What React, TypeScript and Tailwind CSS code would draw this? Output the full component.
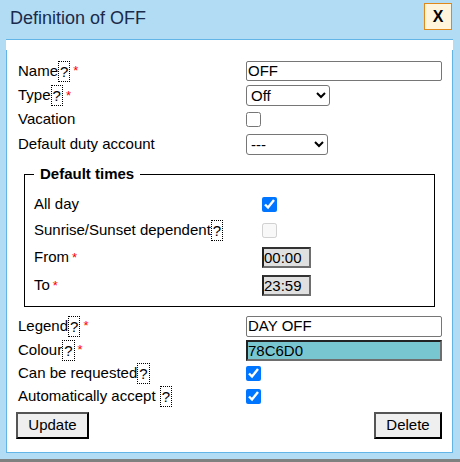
import React from 'react';

const Help = () => (
  <span className="inline-block border border-dotted border-black px-[1px] leading-[19px]">?</span>
);

const Req = () => <span className="text-[#ff0000] text-[13px] align-top ml-[3px]">*</span>;

const Row = ({ label, h = 'h-[24px]', children }: { label: React.ReactNode; h?: string; children?: React.ReactNode }) => (
  <div className={`flex items-center ${h}`}>
    <div className="w-[228px] shrink-0 flex items-center">{label}</div>
    <div className="flex items-center">{children}</div>
  </div>
);

const Check = ({ checked = false, disabled = false }: { checked?: boolean; disabled?: boolean }) => (
  <input type="checkbox" checked={checked} disabled={disabled} readOnly className="w-[15px] h-[15px] m-0" />
);

export default function App() {
  return (
    <div className="w-[460px] h-[462px] bg-[#b1dcf3] flex flex-col text-black" style={{ fontFamily: '"Liberation Sans", Arial, sans-serif' }}>
      <div className="h-[39px] flex items-start justify-between pl-[10px] pr-[8px]">
        <div className="text-[18px] text-[#1b2b4b] pt-[5px]">Definition of OFF</div>
        <button className="mt-[3px] w-[28px] h-[27px] bg-[#fff5dd] border border-[#e0891a] font-bold text-[16px] flex items-center justify-center">
          X
        </button>
      </div>

      <div className="mx-[6px] w-[447px] bg-white border-t border-[#63b5e8] pt-[10px]">
        <div className="border-l border-r border-b border-[#63b5e8] h-[403px] text-[15px] pl-[11px] pr-[10px] pt-[9px]">
          <Row label={<>Name<Help /><Req /></>}>
            <input readOnly value="OFF" className="w-[196px] h-[20px] border border-[#767676] rounded-[2px] px-[1px] text-[15px]" />
          </Row>
          <Row label={<>Type<Help /><Req /></>} h="h-[25px]">
            <select className="w-[84px] h-[21px] border border-[#767676] rounded-[3px] text-[15px]">
              <option>Off</option>
            </select>
          </Row>
          <Row label="Vacation" h="h-[23px]">
            <Check />
          </Row>
          <Row label="Default duty account" h="h-[26px]">
            <select className="w-[82px] h-[21px] border border-[#767676] rounded-[3px] text-[15px]">
              <option>---</option>
            </select>
          </Row>

          <fieldset className="mt-[6px] ml-[6px] w-[411px] h-[144px] border border-black pl-[9px] pt-[6px]">
            <legend className="px-[6px] font-bold">Default times</legend>
            <Row label="All day" h="h-[26px]">
              <Check checked />
            </Row>
            <Row label={<>Sunrise/Sunset dependent<Help /></>} h="h-[26px]">
              <Check disabled />
            </Row>
            <Row label={<>From<Req /></>} h="h-[28px]">
              <input readOnly value="00:00" className="w-[49px] h-[21px] bg-[#e0e0e0] border-2 border-t-[#333] border-l-[#222] border-r-[#6e6e6e] border-b-[#6e6e6e] text-[15px] leading-none px-0" />
            </Row>
            <Row label={<>To<Req /></>} h="h-[28px]">
              <input readOnly value="23:59" className="w-[49px] h-[21px] bg-[#e0e0e0] border-2 border-t-[#333] border-l-[#222] border-r-[#6e6e6e] border-b-[#6e6e6e] text-[15px] leading-none px-0" />
            </Row>
          </fieldset>

          <div className="mt-[7px]">
            <Row label={<>Legend<Help /><Req /></>}>
              <input readOnly value="DAY OFF" className="w-[196px] h-[21px] border border-[#767676] rounded-[2px] px-[1px] text-[15px]" />
            </Row>
            <Row label={<>Colour<Help /><Req /></>} h="h-[24px]">
              <input readOnly value="78C6D0" className="w-[196px] h-[21px] bg-[#78c6d0] border-2 border-t-[#222] border-l-[#222] border-r-[#6e6e6e] border-b-[#6e6e6e] text-[15px] leading-none px-0" />
            </Row>
            <Row label={<>Can be requested<Help /></>} h="h-[23px]">
              <Check checked />
            </Row>
            <Row label={<>Automatically accept&nbsp;<Help /></>} h="h-[23px]">
              <Check checked />
            </Row>
          </div>

          <div className="flex justify-between mt-[4px] -ml-[2px]">
            <button className="w-[73px] h-[27px] bg-[#efefef] border-2 border-t-[#555] border-l-[#555] border-r-black border-b-black text-[15px]">
              Update
            </button>
            <button className="w-[68px] h-[27px] bg-[#efefef] border-2 border-t-[#555] border-l-[#555] border-r-black border-b-black text-[15px]">
              Delete
            </button>
          </div>
        </div>
      </div>

      <div className="mt-auto h-[3px] bg-[#7f8080]" />
    </div>
  );
}
